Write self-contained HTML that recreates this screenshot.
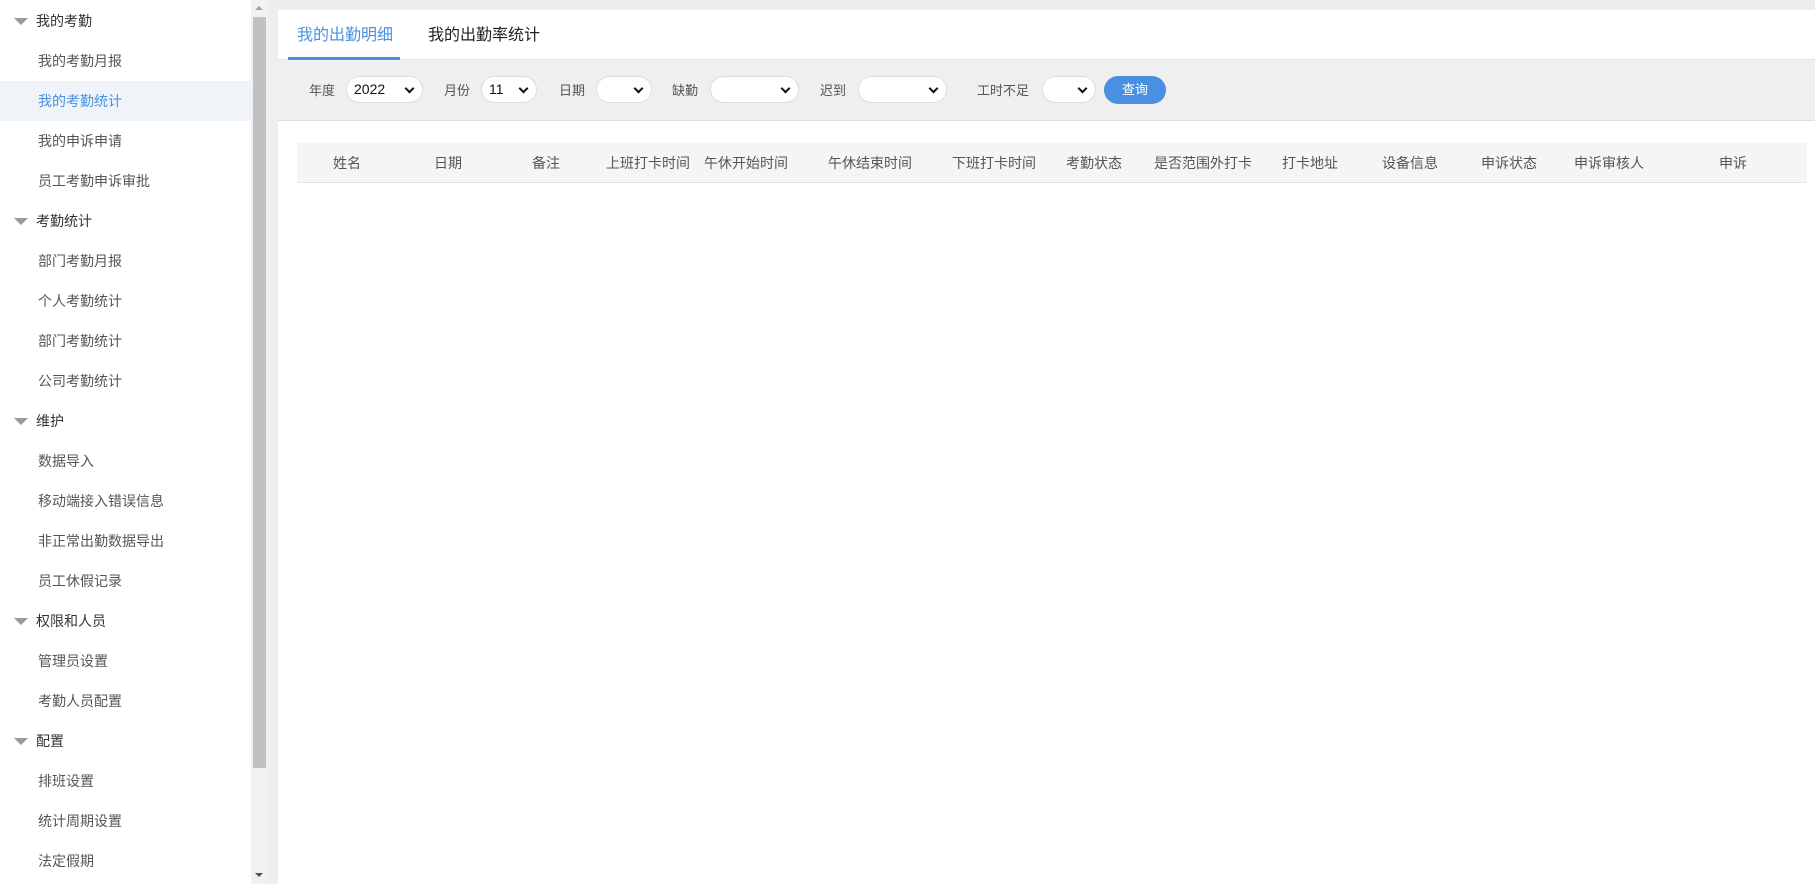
<!DOCTYPE html>
<html><head><meta charset="utf-8"><style>
*{margin:0;padding:0;box-sizing:border-box}
body{width:1815px;height:884px;overflow:hidden;background:#eeeeee;font-family:"Liberation Sans","Noto Sans CJK SC",sans-serif;position:relative}
.side{position:absolute;left:0;top:0;width:251px;height:884px;background:#fff}
.row{position:absolute;left:0;width:251px;height:40px;line-height:40px;font-size:14px;color:#555}
.row.sub{padding-left:38px}
.row.grp{padding-left:36px;color:#333}
.row.act{background:#f0f3f7;color:#4a90e2}
.tri{position:absolute;left:14px;top:17px;width:0;height:0;border-left:7px solid transparent;border-right:7px solid transparent;border-top:7px solid #999}
.track{position:absolute;left:251px;top:0;width:17px;height:884px;background:#f1f1f1}
.thumb{position:absolute;left:253px;top:17px;width:13px;height:751px;background:#c1c1c1}
.up{position:absolute;left:255px;top:6px;border-left:4px solid transparent;border-right:4px solid transparent;border-bottom:4px solid #a3a3a3}
.dn{position:absolute;left:255px;top:873px;border-left:4px solid transparent;border-right:4px solid transparent;border-top:4px solid #505050}
.main{position:absolute;left:278px;top:10px;width:1537px;height:874px;background:#fff}
.tabs{position:absolute;left:0;top:0;width:1537px;height:50px;border-bottom:1px solid #e0e0e0}
.tab{position:absolute;top:11px;font-size:16px;color:#222}
.tab.on{color:#4a90e2}
.ul{position:absolute;left:10px;top:47px;width:112px;height:3px;background:#4a90e2}
.filt{position:absolute;left:0;top:50px;width:1537px;height:61px;background:#efefef;border-bottom:1px solid #ddd}
.lb{position:absolute;top:20px;font-size:13px;color:#555}
.sel{position:absolute;top:16px;height:27px;background:#fff;border:1px solid #ddd;border-radius:14px;font-size:14px;color:#111;padding-left:7px;line-height:25px}
.sel::after{content:"";position:absolute;right:9px;top:8px;width:5px;height:5px;border-right:2px solid #111;border-bottom:2px solid #111;transform:rotate(45deg)}
.btn{position:absolute;left:826px;top:16px;width:62px;height:28px;border-radius:14px;background:#4a90e2;color:#fff;font-size:13px;text-align:center;line-height:28px}
.th{position:absolute;left:19px;top:133px;width:1510px;height:40px;background:#f5f5f5;border-bottom:1px solid #e3e3e3}
.h{position:absolute;top:10px;font-size:14px;color:#555;transform:translateX(-50%);white-space:nowrap}
</style></head><body>
<div class="side">
<div class="row grp" style="top:1px"><span class="tri"></span>我的考勤</div>
<div class="row sub" style="top:41px">我的考勤月报</div>
<div class="row sub act" style="top:81px">我的考勤统计</div>
<div class="row sub" style="top:121px">我的申诉申请</div>
<div class="row sub" style="top:161px">员工考勤申诉审批</div>
<div class="row grp" style="top:201px"><span class="tri"></span>考勤统计</div>
<div class="row sub" style="top:241px">部门考勤月报</div>
<div class="row sub" style="top:281px">个人考勤统计</div>
<div class="row sub" style="top:321px">部门考勤统计</div>
<div class="row sub" style="top:361px">公司考勤统计</div>
<div class="row grp" style="top:401px"><span class="tri"></span>维护</div>
<div class="row sub" style="top:441px">数据导入</div>
<div class="row sub" style="top:481px">移动端接入错误信息</div>
<div class="row sub" style="top:521px">非正常出勤数据导出</div>
<div class="row sub" style="top:561px">员工休假记录</div>
<div class="row grp" style="top:601px"><span class="tri"></span>权限和人员</div>
<div class="row sub" style="top:641px">管理员设置</div>
<div class="row sub" style="top:681px">考勤人员配置</div>
<div class="row grp" style="top:721px"><span class="tri"></span>配置</div>
<div class="row sub" style="top:761px">排班设置</div>
<div class="row sub" style="top:801px">统计周期设置</div>
<div class="row sub" style="top:841px">法定假期</div>
</div>
<div class="track"></div><div class="thumb"></div><div class="up"></div><div class="dn"></div>
<div class="main">
<div class="tabs">
<div class="tab on" style="left:19px">我的出勤明细</div>
<div class="tab" style="left:150px">我的出勤率统计</div>
<div class="ul"></div>
</div>
<div class="filt">
<div class="lb" style="left:31px">年度</div><div class="sel" style="left:68px;width:77px">2022</div>
<div class="lb" style="left:166px">月份</div><div class="sel" style="left:203px;width:56px">11</div>
<div class="lb" style="left:281px">日期</div><div class="sel" style="left:318px;width:56px"></div>
<div class="lb" style="left:394px">缺勤</div><div class="sel" style="left:432px;width:89px"></div>
<div class="lb" style="left:542px">迟到</div><div class="sel" style="left:580px;width:89px"></div>
<div class="lb" style="left:699px">工时不足</div><div class="sel" style="left:764px;width:54px"></div>
<div class="btn">查询</div>
</div>
<div class="th">
<span class="h" style="left:50px">姓名</span>
<span class="h" style="left:151px">日期</span>
<span class="h" style="left:249px">备注</span>
<span class="h" style="left:351px">上班打卡时间</span>
<span class="h" style="left:449px">午休开始时间</span>
<span class="h" style="left:573px">午休结束时间</span>
<span class="h" style="left:697px">下班打卡时间</span>
<span class="h" style="left:797px">考勤状态</span>
<span class="h" style="left:906px">是否范围外打卡</span>
<span class="h" style="left:1013px">打卡地址</span>
<span class="h" style="left:1113px">设备信息</span>
<span class="h" style="left:1212px">申诉状态</span>
<span class="h" style="left:1312px">申诉审核人</span>
<span class="h" style="left:1436px">申诉</span>
</div>
</div>
</body></html>
